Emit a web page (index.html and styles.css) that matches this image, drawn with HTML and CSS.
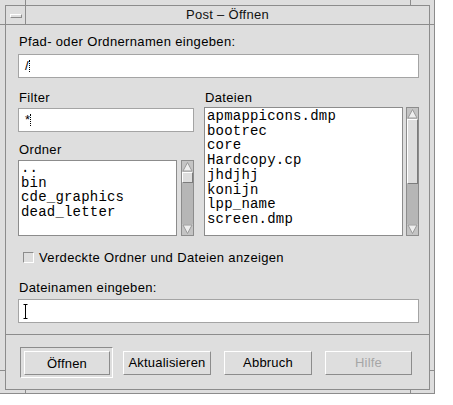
FILE: index.html
```html
<!DOCTYPE html>
<html lang="de">
<head>
<meta charset="utf-8">
<title>Post – Öffnen</title>
<link rel="stylesheet" href="styles.css">
</head>
<body>
<div class="frame">
  <span class="tick tv t-l"></span>
  <span class="tick tv t-r"></span>
  <span class="tick tv b-l"></span>
  <span class="tick tv b-r"></span>
  <span class="tick th h-tl"></span>
  <span class="tick th h-tr"></span>
  <span class="tick th h-bl"></span>
  <span class="tick th h-br"></span>
  <div class="win">
    <div class="titlebar">
      <div class="menubtn"><span class="menuglyph"></span></div>
      <div class="title">Post – Öffnen</div>
    </div>
    <div class="body">
      <div class="label l-path">Pfad- oder Ordnernamen eingeben:</div>
      <div class="field f-path"><span class="val">/</span><span class="dcursor"></span></div>
      <div class="cols">
        <div class="col-left">
          <div class="label l-top">Filter</div>
          <div class="field f-filter"><span class="val">*</span><span class="dcursor"></span></div>
          <div class="label l-ordner">Ordner</div>
          <div class="listrow">
            <div class="list list-ordner">
              <div>..</div>
              <div>bin</div>
              <div>cde_graphics</div>
              <div>dead_letter</div>
            </div>
            <div class="sb sb-ordner">
              <div class="arrow"><svg width="11" height="11" viewBox="0 0 11 11"><polygon points="5.5,1.5 10,10 1,10" fill="#eeeeee" stroke="#9a9a9a" stroke-width="1"/></svg></div>
              <div class="slider s-ordner"></div>
              <div class="trough"></div>
              <div class="arrow"><svg width="11" height="11" viewBox="0 0 11 11"><polygon points="5.5,9.5 10,1 1,1" fill="#eeeeee" stroke="#9a9a9a" stroke-width="1"/></svg></div>
            </div>
          </div>
        </div>
        <div class="col-right">
          <div class="label l-top">Dateien</div>
          <div class="listrow">
            <div class="list list-dateien">
              <div>apmappicons.dmp</div>
              <div>bootrec</div>
              <div>core</div>
              <div>Hardcopy.cp</div>
              <div>jhdjhj</div>
              <div>konijn</div>
              <div>lpp_name</div>
              <div>screen.dmp</div>
            </div>
            <div class="sb sb-dateien">
              <div class="arrow"><svg width="11" height="11" viewBox="0 0 11 11"><polygon points="5.5,1.5 10,10 1,10" fill="#eeeeee" stroke="#9a9a9a" stroke-width="1"/></svg></div>
              <div class="slider s-dateien"></div>
              <div class="trough"></div>
              <div class="arrow"><svg width="11" height="11" viewBox="0 0 11 11"><polygon points="5.5,9.5 10,1 1,1" fill="#eeeeee" stroke="#9a9a9a" stroke-width="1"/></svg></div>
            </div>
          </div>
        </div>
      </div>
      <div class="check">
        <span class="box"></span>
        <span class="label">Verdeckte Ordner und Dateien anzeigen</span>
      </div>
      <div class="label l-name">Dateinamen eingeben:</div>
      <div class="field f-name"><svg class="ibeam" width="5" height="15" viewBox="0 0 5 15"><path d="M0.5 0.5H4.5M2.5 0.5V14.5M0.5 14.5H4.5" stroke="#000" stroke-width="1" fill="none"/></svg></div>
    </div>
    <div class="sep"></div>
    <div class="buttons">
      <div class="default-frame"><div class="btn b-open">Öffnen</div></div>
      <div class="btn b-update">Aktualisieren</div>
      <div class="btn b-cancel">Abbruch</div>
      <div class="btn b-help disabled">Hilfe</div>
    </div>
  </div>
</div>
</body>
</html>
```
FILE: styles.css
```css
* { box-sizing: border-box; }
html, body { margin: 0; padding: 0; background: #ffffff; }
body {
  font-family: "Liberation Sans", Arial, sans-serif;
  font-size: 13px;
  color: #000;
}
.frame {
  position: relative;
  width: 435px;
  height: 394px;
  background: #dedede;
  border-right: 1px solid #8c8c8c;
  border-bottom: 1px solid #8c8c8c;
  padding: 5px 4px 3px 5px;
}
.tick { position: absolute; background: #8c8c8c; }
.tv { width: 1px; }
.th { height: 1px; }
.t-l { left: 25px; top: 0; height: 5px; }
.t-r { left: 410px; top: 0; height: 5px; }
.b-l { left: 25px; top: 390px; height: 3px; }
.b-r { left: 410px; top: 390px; height: 3px; }
.h-tl { left: 0; top: 24px; width: 5px; }
.h-tr { left: 430px; top: 24px; width: 4px; }
.h-bl { left: 0; top: 370px; width: 5px; }
.h-br { left: 430px; top: 370px; width: 4px; }

.win {
  height: 100%;
  border: 1px solid #8c8c8c;
  display: flex;
  flex-direction: column;
}
.titlebar {
  display: flex;
  height: 19px;
  border-bottom: 1px solid #8c8c8c;
}
.menubtn {
  width: 20px;
  border-right: 1px solid #8c8c8c;
  display: flex;
  align-items: center;
  justify-content: center;
}
.menuglyph {
  width: 12px;
  height: 4px;
  border-top: 1px solid #ffffff;
  border-left: 1px solid #ffffff;
  border-bottom: 1px solid #8c8c8c;
  border-right: 1px solid #8c8c8c;
  margin-top: 1px;
}
.title {
  flex: 1;
  text-align: center;
  line-height: 18px;
  font-size: 13px;
  letter-spacing: 0.3px;
  color: #111;
}
.body {
  padding: 0 10px 0 12px;
}
.label {
  line-height: 15px;
  letter-spacing: 0.35px;
  padding-left: 1px;
}
.l-path { margin-top: 9px; }
.field {
  height: 24px;
  background: #ffffff;
  border: 1px solid #a4a4a4;
  display: flex;
  align-items: center;
  padding-left: 6px;
  font-size: 13px;
}
.f-path { margin-top: 5px; }
.val { line-height: 14px; }
.dcursor {
  display: inline-block;
  width: 1px;
  height: 12px;
  border-left: 1px dotted #000;
  margin-left: 0px;
}
.cols {
  display: flex;
  gap: 10px;
  margin-top: 12px;
}
.col-left { width: 176px; display: flex; flex-direction: column; }
.col-right { width: 215px; display: flex; flex-direction: column; }
.l-top { }
.f-filter { margin-top: 3px; }
.l-ordner { margin-top: 10px; }
.col-left .listrow { margin-top: 3px; height: 76px; }
.col-right .listrow { margin-top: 2px; height: 129px; }
.listrow { display: flex; }
.list {
  background: #ffffff;
  border: 1px solid #8c8c8c;
  font-family: "Liberation Mono", "Courier New", monospace;
  font-size: 14px;
  letter-spacing: 0.2px;
  line-height: 14.7px;
  padding: 0 0 0 2px;
  overflow: hidden;
  white-space: nowrap;
}
.list-ordner { width: 160px; }
.list-dateien { width: 199px; padding-top: 1px; }
.sb {
  width: 13px;
  border: 1px solid #8c8c8c;
  background: #b6b6b6;
  display: flex;
  flex-direction: column;
}
.sb-ordner { margin-left: 4px; }
.sb-dateien { margin-left: 3px; }
.arrow {
  height: 11px;
  display: flex;
  align-items: center;
  justify-content: center;
  background: #c4c4c4;
}
.slider {
  background: #dedede;
  border-top: 1px solid #ffffff;
  border-left: 1px solid #ffffff;
  border-bottom: 1px solid #7c7c7c;
  border-right: 1px solid #7c7c7c;
}
.s-ordner { height: 11px; }
.s-dateien { height: 65px; }
.trough { flex: 1; }
.check {
  display: flex;
  align-items: center;
  margin-top: 14px;
  padding-left: 5px;
  height: 15px;
}
.box {
  width: 11px;
  height: 11px;
  border-top: 1px solid #8c8c8c;
  border-left: 1px solid #8c8c8c;
  border-bottom: 1px solid #ffffff;
  border-right: 1px solid #ffffff;
  margin-right: 5px;
}
.check .label { padding-left: 0; }
.l-name { margin-top: 15px; }
.f-name { margin-top: 4px; padding-left: 4px; }
.ibeam { display: block; }
.sep {
  margin-top: 11px;
  height: 1px;
  background: #8c8c8c;
}
.buttons {
  display: flex;
  align-items: center;
  padding: 12px 0 0 14px;
}
.default-frame {
  width: 93px;
  height: 31px;
  border-top: 1px solid #8c8c8c;
  border-left: 1px solid #8c8c8c;
  border-bottom: 1px solid #ffffff;
  border-right: 1px solid #ffffff;
  padding: 3px 2px 2px 3px;
}
.btn {
  height: 24px;
  width: 88px;
  border-top: 1px solid #ffffff;
  border-left: 1px solid #ffffff;
  border-bottom: 1px solid #8c8c8c;
  border-right: 1px solid #8c8c8c;
  display: flex;
  align-items: center;
  justify-content: center;
  letter-spacing: 0.2px;
}
.b-open { width: 86px; }
.b-update { margin-left: 10px; }
.b-cancel { margin-left: 13px; }
.b-help { margin-left: 13px; width: 87px; }
.disabled { color: #a6a6a6; }
```
